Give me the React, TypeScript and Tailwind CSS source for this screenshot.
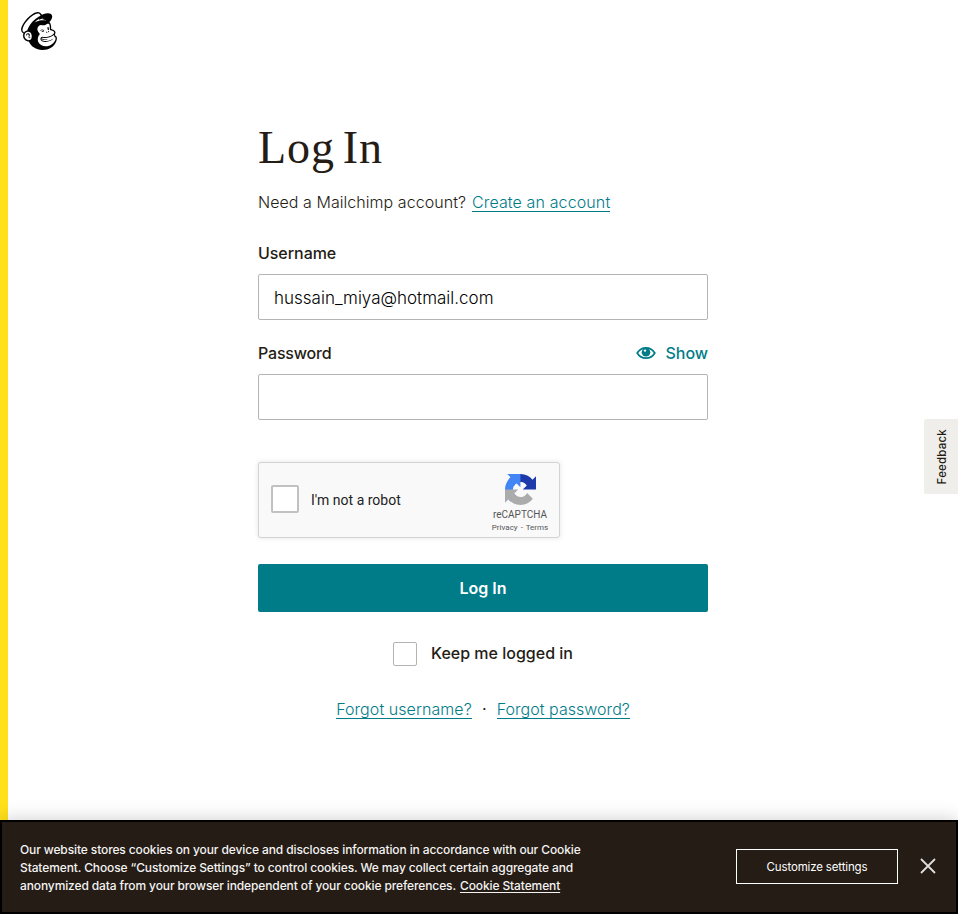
import type { ReactNode } from 'react';
import { SiMailchimp } from 'react-icons/si';

function TextLink({ children, className = '' }: { children: ReactNode; className?: string }) {
  return (
    <a href="#" className={`h-[19px] border-b border-[#007c89] leading-[18px] font-light whitespace-nowrap text-[#007c89] ${className}`}>
      {children}
    </a>
  );
}

function EyeIcon() {
  return (
    <svg viewBox="0 0 20 14" className="h-[14px] w-5" fill="none">
      <path d="M1.200 7C3.300 3.400 6.400 1.800 10 1.800S16.700 3.400 18.800 7C16.700 10.600 13.600 12.200 10 12.200S3.300 10.600 1.200 7Z" stroke="#007c89" strokeWidth="1.700" />
      <circle cx="10" cy="6.300" r="4.300" fill="#007c89" />
      <circle cx="9" cy="4.600" r="1.200" fill="#fff" />
    </svg>
  );
}

function RecaptchaLogo() {
  return (
    <svg viewBox="0 0 64 64" className="h-[31px] w-[31px]">
      <path fill="#1c3aa9" d="M64 31.955l-.033-1.370V4.687l-7.160 7.160C50.948 4.674 42.033.093 32.050.093c-10.400 0-19.622 4.960-25.458 12.640l11.736 11.860a15.550 15.550 0 0 1 4.754-5.334c2.050-1.600 4.952-2.906 8.968-2.906.485 0 .860.057 1.135.163 4.976.393 9.288 3.140 11.828 7.124l-8.307 8.307L64 31.953" />
      <path fill="#4285f4" d="M31.862.094l-1.370.033H4.594l7.160 7.160C4.580 13.147 0 22.060 0 32.046c0 10.400 4.960 19.622 12.640 25.458L24.500 45.768a15.550 15.550 0 0 1-5.334-4.754c-1.600-2.050-2.906-4.952-2.906-8.968 0-.485.057-.860.163-1.135.393-4.976 3.140-9.288 7.124-11.828l8.307 8.307L31.860.095" />
      <path fill="#ababab" d="M.001 32.045l.033 1.370v25.898l7.160-7.160c5.860 7.173 14.774 11.754 24.760 11.754 10.400 0 19.622-4.960 25.458-12.640l-11.736-11.860a15.550 15.550 0 0 1-4.754 5.334c-2.050 1.600-4.952 2.906-8.968 2.906-.485 0-.860-.057-1.135-.163-4.976-.393-9.288-3.140-11.828-7.124l8.307-8.307c-10.522.040-22.400.066-27.295-.005" />
    </svg>
  );
}

function Recaptcha() {
  return (
    <div className="mt-[42px] flex h-[76px] w-[302px] rounded-[3px] border border-[#d3d3d3] bg-[#f9f9f9] pl-3 font-['Roboto',sans-serif] shadow-[0_0_4px_1px_rgba(0,0,0,0.08)]">
      <div className="flex flex-1 items-center">
        <div className="-mt-[3px] h-7 w-7 rounded-[2px] border-2 border-[#c1c1c1] bg-white" />
        <span className="ml-3 text-[14px] leading-[17px] text-[#222]">I'm not a robot</span>
      </div>
      <div className="flex w-[78px] flex-col items-center pt-[11px] text-[#555]">
        <RecaptchaLogo />
        <span className="mt-[4px] text-[10px] leading-[12px]">reCAPTCHA</span>
        <span className="mt-px text-[8px] leading-[12px]">Privacy <span className="px-px">-</span> Terms</span>
      </div>
    </div>
  );
}

function LoginForm() {
  return (
    <main className="ml-[250px] flex w-[450px] flex-col">
      <h1 className="mt-[122px] h-[52px] font-['Liberation_Serif',serif] text-[46px] leading-[52px] tracking-[0.900px] [word-spacing:-4.500px] whitespace-nowrap">Log In</h1>
      <div className="mt-[19px] flex h-[19px] gap-[6px] text-[16px] leading-[18px]">
        <span className="font-light tracking-[0.050px] whitespace-nowrap">Need a Mailchimp account?</span>
        <TextLink className="tracking-[0.120px]">Create an account</TextLink>
      </div>

      <label className="mt-[29px] h-[25px] text-[16px] leading-6 font-medium"><span className="tracking-[-0.050px]">Username</span></label>
      <div className="mt-[8px] flex h-[46px] items-center rounded-[2px] border border-[#b5b4b2] px-[15px] pt-px text-[17px] leading-6 font-light text-black">
        <span>hussain_miya@hotmail.com</span>
      </div>

      <div className="mt-[21px] flex h-6 items-center justify-between text-[16px] leading-6 font-medium">
        <span className="tracking-[-0.200px]">Password</span>
        <span className="flex items-center gap-[10px] text-[#007c89]">
          <EyeIcon />
          <span className="tracking-[-0.050px]">Show</span>
        </span>
      </div>
      <div className="mt-[9px] h-[46px] rounded-[2px] border border-[#b5b4b2]" />

      <Recaptcha />

      <button className="mt-[26px] h-12 rounded-[2px] bg-[#007c89] text-[16px] leading-6 font-semibold text-white">Log In</button>

      <div className="mt-[30px] flex h-6 items-center justify-center gap-[14px] text-[16px] leading-6 font-medium">
        <span className="h-6 w-6 rounded-[2px] border border-[#b5b4b2]" />
        <span className="mb-[2px]">Keep me logged in</span>
      </div>

      <div className="mt-[34px] flex h-[19px] justify-center text-[16px] leading-[18px]">
        <TextLink className="tracking-[0.070px]">Forgot username?</TextLink>
        <span className="w-[25px] text-center">·</span>
        <TextLink className="tracking-[0.030px]">Forgot password?</TextLink>
      </div>
    </main>
  );
}

function CookieBanner() {
  return (
    <footer className="relative flex h-[94px] items-center border-2 border-black bg-[#241c15] pr-[18px] pl-[18px] text-[12px] text-white shadow-[0_0_18px_rgba(0,0,0,0.2)]">
      <p className="flex-1 pt-[2px] leading-[18px] font-medium tracking-[-0.115px] whitespace-nowrap text-[#f4f3f2]">
        <span>Our website stores cookies on your device and discloses information in accordance with our Cookie</span><br />
        <span>Statement. Choose “Customize Settings” to control cookies. We may collect certain aggregate and</span><br />
        <span>anonymized data from your browser independent of your cookie preferences.</span>
        <a href="#" className="ml-[4px] underline underline-offset-2">Cookie Statement</a>
      </p>
      <button className="mb-px h-[35px] w-[162px] border border-white pt-[2px] text-[11.500px] tracking-[-0.150px]">Customize settings</button>
      <svg viewBox="0 0 20 20" className="mb-[3px] ml-5 h-5 w-5" stroke="#dedddc" strokeWidth="1.800">
        <path d="M3 3l14 14M17 3L3 17" />
      </svg>
    </footer>
  );
}

export default function App() {
  return (
    <div className="relative flex h-[914px] flex-col overflow-hidden bg-white font-['Inter',sans-serif] text-[#241c15]">
      <div className="relative flex flex-1 border-l-8 border-[#ffe01b]">
        <LoginForm />
        <SiMailchimp className="absolute top-[11px] left-[12px] h-[40px] w-[38px] text-black" />
        <button className="absolute top-[419px] right-0 flex h-[75px] w-[34px] items-center justify-center rounded-l-[2px] bg-[#efeeea] pl-[3px] text-[11.500px] font-medium tracking-[0.200px]">
          <span className="rotate-180 [writing-mode:vertical-rl]">Feedback</span>
        </button>
      </div>
      <CookieBanner />
    </div>
  );
}
